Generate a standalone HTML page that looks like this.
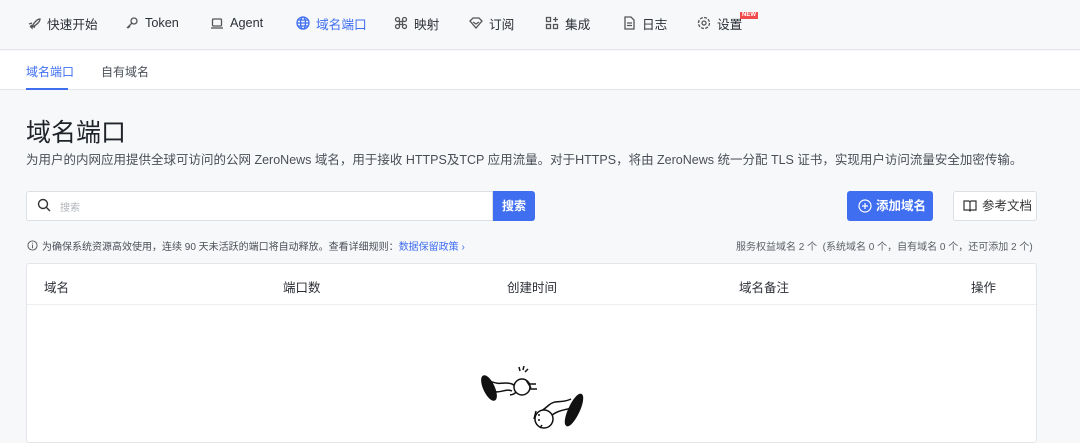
<!DOCTYPE html>
<html><head><meta charset="utf-8"><style>
*{margin:0;padding:0;box-sizing:border-box}
body{width:1080px;height:430px;overflow:hidden;background:#f7f8fa;font-family:"Liberation Sans","Noto Sans CJK SC",sans-serif;color:#1f2329;position:relative}
.nav{position:absolute;left:0;top:0;width:1080px;height:50px;background:#f7f8fa;border-bottom:1px solid #e3e5e8}
.ni{position:absolute;top:14px;font-size:12.7px;color:#2b2f36;display:flex;align-items:center;gap:6px;height:18px}
.ni svg{width:14px;height:14px;fill:none;stroke:#555;stroke-width:1.3}
.ni.act{color:#3f6ef0}.ni.act svg{stroke:#3f6ef0}
.sub{position:absolute;left:0;top:51px;width:1080px;height:39px;background:#fff;border-bottom:1px solid #e3e5e8}
.st{position:absolute;top:12px;font-size:12px;color:#4a4f57}
.abs{position:absolute}
</style></head><body>
<div class="nav">
<div class="ni" style="left:27px"><svg viewBox="0 0 14 14"><path d="M3 11l2-2M5 12c0-2 1-4 4-7 2-2 3-2 4-2 0 1 0 2-2 4-3 3-5 4-7 4zM2 8l3-1M7 12l1-3"/></svg>快速开始</div>
<div class="ni" style="left:125px"><svg viewBox="0 0 14 14"><circle cx="9" cy="5" r="3"/><path d="M7 7l-5 5M3 11l1 1M4 10l1 1"/></svg>Token</div>
<div class="ni" style="left:210px"><svg viewBox="0 0 14 14"><rect x="2.5" y="3" width="9" height="7" rx="1"/><path d="M1 12h12"/></svg>Agent</div>
<div class="ni act" style="left:296px"><svg viewBox="0 0 14 14"><circle cx="7" cy="7" r="6"/><ellipse cx="7" cy="7" rx="2.5" ry="6"/><path d="M1 7h12M2 4h10M2 10h10"/></svg>域名端口</div>
<div class="ni" style="left:394px"><svg viewBox="0 0 14 14"><circle cx="3.5" cy="3.5" r="2"/><circle cx="10.5" cy="3.5" r="2"/><circle cx="3.5" cy="10.5" r="2"/><circle cx="10.5" cy="10.5" r="2"/><rect x="5.5" y="5.5" width="3" height="3"/></svg>映射</div>
<div class="ni" style="left:469px"><svg viewBox="0 0 14 14"><path d="M1 5l3-3h6l3 3-6 7z M4 6l3 2 3-2"/></svg>订阅</div>
<div class="ni" style="left:545px"><svg viewBox="0 0 14 14"><rect x="1.5" y="1.5" width="4" height="4"/><rect x="1.5" y="8.5" width="4" height="4"/><rect x="8.5" y="8.5" width="4" height="4"/><path d="M10.5 1v5M8 3.5h5"/></svg>集成</div>
<div class="ni" style="left:622px"><svg viewBox="0 0 14 14"><path d="M3 1h6l3 3v9H3zM5 7h5M5 9.5h5"/></svg>日志</div>
<div class="ni" style="left:697px"><svg viewBox="0 0 14 14"><circle cx="7" cy="7" r="2"/><circle cx="7" cy="7" r="5.5" stroke-dasharray="3 1.3"/></svg>设置</div>
<div class="abs" style="left:740px;top:12px;background:#f04a4a;color:#fff;font-size:6px;font-weight:bold;padding:0 2px;line-height:7px">NEW</div>
</div>
<div class="sub">
<div class="st" style="left:26px;color:#3f6ef0">域名端口</div>
<div class="abs" style="left:26px;top:37px;width:42px;height:2px;background:#3f6ef0"></div>
<div class="st" style="left:101px">自有域名</div>
</div>
<div class="abs" style="left:26px;top:113px;font-size:25px;color:#1f2329">域名端口</div>
<div class="abs" style="left:26px;top:149px;font-size:12.5px;color:#4a4f57">为用户的内网应用提供全球可访问的公网 ZeroNews 域名，用于接收 HTTPS及TCP 应用流量。对于HTTPS，将由 ZeroNews 统一分配 TLS 证书，实现用户访问流量安全加密传输。</div>
<div class="abs" style="left:26px;top:191px;width:467px;height:30px;background:#fff;border:1px solid #dcdfe4;border-radius:3px 0 0 3px"></div>
<svg class="abs" style="left:37px;top:198px" width="14" height="14" viewBox="0 0 14 14" fill="none" stroke="#333" stroke-width="1.4"><circle cx="6" cy="6" r="4.5"/><path d="M9.5 9.5l3.5 3.5"/></svg>
<div class="abs" style="left:60px;top:199px;font-size:10px;color:#b0b4ba">搜索</div>
<div class="abs" style="left:493px;top:191px;width:42px;height:30px;background:#3f6ef0;color:#fff;font-size:12px;font-weight:bold;line-height:30px;text-align:center;border-radius:0 3px 3px 0">搜索</div>
<div class="abs" style="left:847px;top:191px;width:86px;height:30px;background:#3f6ef0;border-radius:3px;color:#fff;font-size:12.5px;font-weight:bold;line-height:30px;padding-left:29px">添加域名</div>
<svg class="abs" style="left:858px;top:199px" width="14" height="14" viewBox="0 0 14 14" fill="none" stroke="#fff" stroke-width="1.2"><circle cx="7" cy="7" r="6"/><path d="M7 4v6M4 7h6"/></svg>
<div class="abs" style="left:953px;top:191px;width:84px;height:30px;background:#fff;border:1px solid #dcdfe4;border-radius:3px;font-size:12.5px;line-height:28px;padding-left:28px;color:#333">参考文档</div>
<svg class="abs" style="left:963px;top:199px" width="14" height="13" viewBox="0 0 14 13" fill="none" stroke="#333" stroke-width="1.2"><path d="M1 2h5l1 1 1-1h5v9H8l-1 1-1-1H1zM7 3v8"/></svg>
<svg class="abs" style="left:27px;top:240px" width="11" height="11" viewBox="0 0 12 12" fill="none" stroke="#555" stroke-width="1"><circle cx="6" cy="6" r="5"/><path d="M6 5v4M6 3v1"/></svg>
<div class="abs" style="left:42px;top:238px;font-size:10px;color:#4a4f57">为确保系统资源高效使用，连续 90 天未活跃的端口将自动释放。查看详细规则：<span style="color:#3f6ef0">数据保留政策 ›</span></div>
<div class="abs" style="left:736px;top:238px;font-size:10px;color:#5a5f66">服务权益域名 2 个 &nbsp;(系统域名 0 个，自有域名 0 个，还可添加 2 个)</div>
<div class="abs" style="left:26px;top:263px;width:1011px;height:180px;background:#fff;border:1px solid #e3e5e8;border-radius:3px"></div>
<div class="abs" style="left:27px;top:304px;width:1009px;height:1px;background:#eceef1"></div>
<div class="abs" style="top:277px;left:44px;font-size:12.5px;color:#2b2f36">域名</div>
<div class="abs" style="top:277px;left:283px;font-size:12.5px;color:#2b2f36">端口数</div>
<div class="abs" style="top:277px;left:507px;font-size:12.5px;color:#2b2f36">创建时间</div>
<div class="abs" style="top:277px;left:739px;font-size:12.5px;color:#2b2f36">域名备注</div>
<div class="abs" style="top:277px;left:971px;font-size:12.5px;color:#2b2f36">操作</div>
<svg class="abs" style="left:478px;top:363px" width="110" height="67" viewBox="0 0 110 67" fill="none" stroke="#111" stroke-width="1.5">
<ellipse cx="11" cy="25" rx="5" ry="13" fill="#111" transform="rotate(-25 11 25)"/>
<path d="M12 18c10 5 15 0 22 3s6 10 -2 11 M14 28c8 3 14-3 20 0"/>
<circle cx="44" cy="24" r="8" fill="#fff"/><path d="M48 17l5 8M50 21h8M52 26h7M41 4l1 4M46 3l-1 4M50 6l-3 3"/>
<ellipse cx="96" cy="47" rx="5" ry="17" fill="#111" transform="rotate(25 96 47)"/>
<path d="M93 36c-10 5-15 0-22 6s-8 6-10 8 M95 45c-10 2-18 3-24 10"/>
<circle cx="66" cy="56" r="9" fill="#fff"/><path d="M58 48l-2 8M60 52h2M60 57h2M62 65l2-3"/>
</svg>
</body></html>
